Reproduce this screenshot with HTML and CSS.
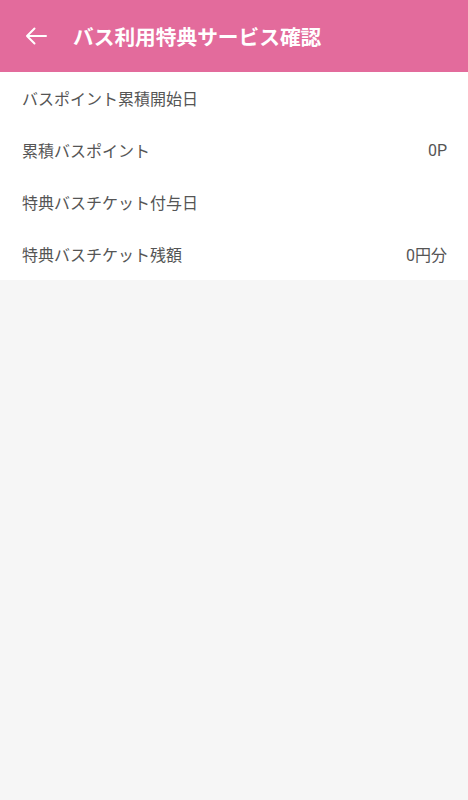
FILE: index.html
```html
<!DOCTYPE html>
<html lang="ja">
<head>
<meta charset="utf-8">
<link rel="stylesheet" href="styles.css">
</head>
<body>
<header class="appbar">
  <button class="back" aria-label="戻る">
    <svg width="24" height="24" viewBox="0 0 24 24"><path d="M22 12H3M10.5 4.5L3 12l7.5 7.5" fill="none" stroke="#fff" stroke-width="2" stroke-linecap="round" stroke-linejoin="round"/></svg>
  </button>
  <h1 class="title">バス利用特典サービス確認</h1>
</header>
<main class="list">
  <div class="row"><span class="label">バスポイント累積開始日</span><span class="value"></span></div>
  <div class="row"><span class="label">累積バスポイント</span><span class="value">0P</span></div>
  <div class="row"><span class="label">特典バスチケット付与日</span><span class="value"></span></div>
  <div class="row"><span class="label">特典バスチケット残額</span><span class="value">0円分</span></div>
</main>
</body>
</html>
```
FILE: styles.css
```css
html, body {
  margin: 0;
  padding: 0;
  height: 100%;
}
body {
  background: #f6f6f6;
  font-family: Roboto, "Noto Sans CJK JP", "Noto Sans", sans-serif;
}
.appbar {
  height: 72px;
  background: #e36b9c;
  display: flex;
  align-items: center;
  padding-left: 24px;
  box-sizing: border-box;
}
.back {
  width: 24px;
  height: 24px;
  padding: 0;
  border: 0;
  background: none;
  display: flex;
  align-items: center;
  justify-content: center;
}
.title {
  margin: 0 0 0 25px;
  color: #fff;
  font-size: 20.7px;
  font-weight: 700;
}
.list {
  background: #fff;
}
.row {
  height: 52px;
  display: flex;
  align-items: center;
  justify-content: space-between;
  padding: 0 21px 0 22px;
  color: #555;
  font-size: 16px;
}
```
